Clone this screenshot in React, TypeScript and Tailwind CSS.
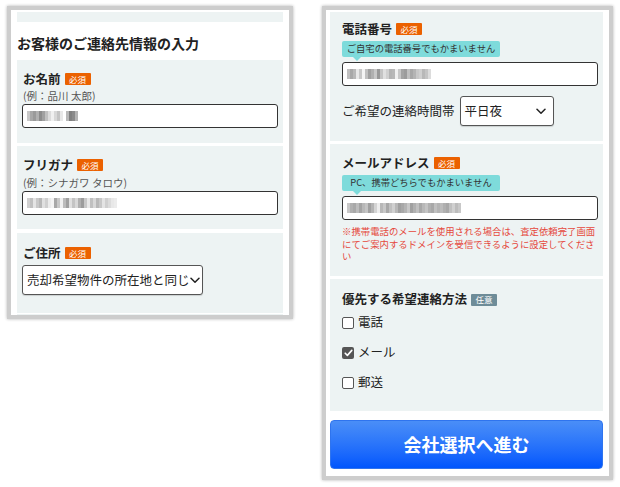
import React from "react";

const FONT = { fontFamily: '"Noto Sans CJK JP", "Noto Sans", sans-serif' };

function Badge({ text, color }: { text: string; color: string }) {
  return (
    <span
      className="ml-[4px] inline-flex h-[12px] w-[26px] items-center justify-center rounded-[1px] text-[8.5px] font-normal leading-none text-white"
      style={{ background: color }}
    >
      {text}
    </span>
  );
}

function Blur({ cells }: { cells: string[] }) {
  return (
    <div className="flex h-[10px] items-stretch">
      {cells.map((c, i) => (
        <div key={i} className="w-[3px]" style={{ background: c }} />
      ))}
    </div>
  );
}

const n1 = ["#c8c8c8", "#a8a8a8", "#9a9a9a", "#b0b0b0", "#8c8c8c", "#a0a0a0", "#c0c0c0", "#dcdcdc", "#f0f0f0", "#d8d8d8", "#c4c4c4", "#e8e8e8", "#fff", "#b8b8b8", "#808080", "#8a8a8a", "#b4b4b4"];
const n2 = ["#d0d0d0", "#c0c0c0", "#e4e4e4", "#c8c8c8", "#b8b8b8", "#e0e0e0", "#d0d0d0", "#ececec", "#f4f4f4", "#a8a8a8", "#c8c8c8", "#f0f0f0", "#bcbcbc", "#a0a0a0", "#e0e0e0", "#c4c4c4", "#d8d8d8", "#b0b0b0", "#9c9c9c", "#c8c8c8", "#e8e8e8", "#c0c0c0", "#d8d8d8", "#b8b8b8", "#c8c8c8", "#e4e4e4", "#d0d0d0", "#dcdcdc", "#e8e8e8", "#ececec"];
const n3 = ["#c0c0c0", "#a8a8a8", "#b8b8b8", "#e8e8e8", "#c8c8c8", "#f4f4f4", "#c0c0c0", "#a0a0a0", "#b0b0b0", "#c8c8c8", "#989898", "#c4c4c4", "#e0e0e0", "#d0d0d0", "#b4b4b4", "#b8b8b8", "#f0f0f0", "#c8c8c8", "#a4a4a4", "#9c9c9c", "#c0c0c0", "#a8a8a8", "#b4b4b4", "#c8c8c8", "#d0d0d0", "#b8b8b8", "#c4c4c4", "#dcdcdc"];
const n4 = ["#c8c8c8", "#b0b0b0", "#a8a8a8", "#bcbcbc", "#a4a4a4", "#b8b8b8", "#c4c4c4", "#a0a0a0", "#b4b4b4", "#d4d4d4", "#eeeeee", "#b8b8b8", "#c8c8c8", "#a8a8a8", "#c0c0c0", "#d0d0d0", "#b8b8b8", "#a0a0a0", "#a8a8a8", "#b4b4b4", "#c8c8c8", "#a0a0a0", "#b0b0b0", "#c0c0c0", "#a8a8a8", "#b8b8b8", "#c4c4c4", "#b0b0b0", "#a8a8a8", "#c0c0c0", "#b4b4b4", "#bcbcbc", "#b0b0b0", "#a8a8a8", "#c0c0c0", "#d0d0d0", "#bcbcbc", "#c8c8c8"];

function Input({ cells, h = 24 }: { cells: string[]; h?: number }) {
  return (
    <div
      className="flex items-center rounded-[3px] border border-[#333] bg-white pl-[4px]"
      style={{ height: h }}
    >
      <Blur cells={cells} />
    </div>
  );
}

function Chevron() {
  return (
    <svg width="10" height="7" viewBox="0 0 10 7" fill="none" className="shrink-0">
      <path d="M1 1.2 L5 5.2 L9 1.2" stroke="#222" strokeWidth="1.5" strokeLinecap="round" strokeLinejoin="round" />
    </svg>
  );
}

function Tooltip({ text }: { text: string }) {
  return (
    <div className="relative mt-[4px] flex h-[16px] w-[158px] items-center justify-center rounded-[2px] bg-[#7edbdb] text-[9.3px] leading-none text-[#333]">
      {text}
      <div className="absolute left-[11px] top-[16px] h-0 w-0 border-l-[4px] border-r-[4px] border-t-[4px] border-l-transparent border-r-transparent border-t-[#7edbdb]" />
    </div>
  );
}

function Checkbox({ checked, label, first }: { checked?: boolean; label: string; first?: boolean }) {
  return (
    <div className={`flex h-[20px] items-center ${first ? "mt-[5px]" : "mt-[10px]"}`}>
      {checked ? (
        <div className="flex h-[12px] w-[12px] items-center justify-center rounded-[2px] bg-[#555]">
          <svg width="9" height="8" viewBox="0 0 9 8">
            <path d="M1.2 4.2 L3.4 6.4 L7.8 1.4" stroke="#fff" strokeWidth="1.6" fill="none" strokeLinecap="round" strokeLinejoin="round" />
          </svg>
        </div>
      ) : (
        <div className="h-[12px] w-[12px] rounded-[2px] border border-[#555] bg-white" />
      )}
      <span className="ml-[4px] text-[12.5px] text-[#222]">{label}</span>
    </div>
  );
}

export default function App() {
  return (
    <div className="flex h-[487px] w-[620px] items-start bg-white pl-[7px] pt-[6px]" style={FONT}>
      {/* Left panel */}
      <div className="w-[286px] border-[4px] border-[#cdcdcd] bg-white shadow-[0_0_3px_rgba(0,0,0,0.3)]">
        <div className="px-[6px] pb-[0px] pt-[2px]">
          <div className="h-[10px] bg-[#edf3f3]" />
          <div className="mb-[7px] mt-[11px] h-[20px] text-[14px] font-bold leading-[20px] text-[#222]">
            お客様のご連絡先情報の入力
          </div>
          <div className="bg-[#edf3f3] px-[5px] pb-[15px] pt-[11px]">
            <div className="flex h-[16px] items-center pl-[1px] text-[12.5px] font-bold text-[#222]">
              お名前<Badge text="必須" color="#eb6100" />
            </div>
            <div className="mt-[2px] h-[14px] pl-[1px] text-[10.5px] leading-[14px] text-[#555]">(例：品川 太郎)</div>
            <div className="mt-[1px]">
              <Input cells={n1} />
            </div>
          </div>
          <div className="mt-[3px] bg-[#edf3f3] px-[5px] pb-[14px] pt-[11px]">
            <div className="flex h-[16px] items-center pl-[1px] text-[12.5px] font-bold text-[#222]">
              フリガナ<Badge text="必須" color="#eb6100" />
            </div>
            <div className="mt-[3px] h-[14px] pl-[1px] text-[10.5px] leading-[14px] text-[#555]">(例：シナガワ タロウ)</div>
            <div className="mt-[1px]">
              <Input cells={n2} h={24} />
            </div>
          </div>
          <div className="mt-[4px] bg-[#edf3f3] px-[5px] pb-[18px] pt-[12px]">
            <div className="flex h-[16px] items-center pl-[1px] text-[12.5px] font-bold text-[#222]">
              ご住所<Badge text="必須" color="#eb6100" />
            </div>
            <div className="mt-[4px] flex h-[30px] w-[181px] items-center justify-between overflow-hidden rounded-[3px] border border-[#555] bg-white pl-[4px] pr-[5px] shadow-[0_1px_1px_rgba(0,0,0,0.15)]">
              <span className="shrink-0 whitespace-nowrap text-[12.5px] text-[#222]">売却希望物件の所在地と同じ</span>
              <Chevron />
            </div>
          </div>
          <div className="mt-[1px] h-[1px] bg-[#edf3f3]" />
        </div>
      </div>

      {/* Right panel */}
      <div className="ml-[29px] w-[291px] border-[4px] border-[#cdcdcd] bg-white shadow-[0_0_3px_rgba(0,0,0,0.3)]">
        <div className="pl-[4px] pr-[6px] pb-[7px] pt-[2px]">
          <div className="bg-[#edf3f3] pb-[15px] pl-[12px] pr-[5px] pt-[9px]">
            <div className="flex h-[16px] items-center text-[12.5px] font-bold text-[#222]">
              電話番号<Badge text="必須" color="#eb6100" />
            </div>
            <Tooltip text="ご自宅の電話番号でもかまいません" />
            <div className="mt-[5px]">
              <Input cells={n3} />
            </div>
            <div className="mt-[10px] flex items-center">
              <span className="whitespace-nowrap text-[12.5px] text-[#222]">ご希望の連絡時間帯</span>
              <div className="ml-[5px] flex h-[30px] w-[94px] items-center justify-between rounded-[3px] border border-[#555] bg-white pl-[4px] pr-[7px] shadow-[0_1px_1px_rgba(0,0,0,0.15)]">
                <span className="text-[12.5px] text-[#222]">平日夜</span>
                <Chevron />
              </div>
            </div>
          </div>
          <div className="mt-[3px] bg-[#edf3f3] pb-[13px] pl-[12px] pr-[5px] pt-[11px]">
            <div className="flex h-[16px] items-center text-[12.5px] font-bold text-[#222]">
              メールアドレス<Badge text="必須" color="#eb6100" />
            </div>
            <Tooltip text="PC、携帯どちらでもかまいません" />
            <div className="mt-[5px]">
              <Input cells={n4} />
            </div>
            <div className="mt-[5px] text-[9.4px] leading-[12.5px] text-[#e5483c]">
              ※携帯電話のメールを使用される場合は、査定依頼完了画面にてご案内するドメインを受信できるように設定してください
            </div>
          </div>
          <div className="mt-[3px] bg-[#edf3f3] pb-[18px] pl-[12px] pr-[5px] pt-[13px]">
            <div className="flex h-[16px] items-center text-[12.5px] font-bold text-[#222]">
              優先する希望連絡方法<Badge text="任意" color="#6e8c98" />
            </div>
            <Checkbox first label="電話" />
            <Checkbox checked label="メール" />
            <Checkbox label="郵送" />
          </div>
          <div className="mt-[9px] flex h-[49px] items-center justify-center rounded-[4px] border border-[#2f74ee] bg-gradient-to-b from-[#4a8ef7] to-[#0055fd] text-[18px] font-bold text-white">
            会社選択へ進む
          </div>
        </div>
      </div>
    </div>
  );
}
